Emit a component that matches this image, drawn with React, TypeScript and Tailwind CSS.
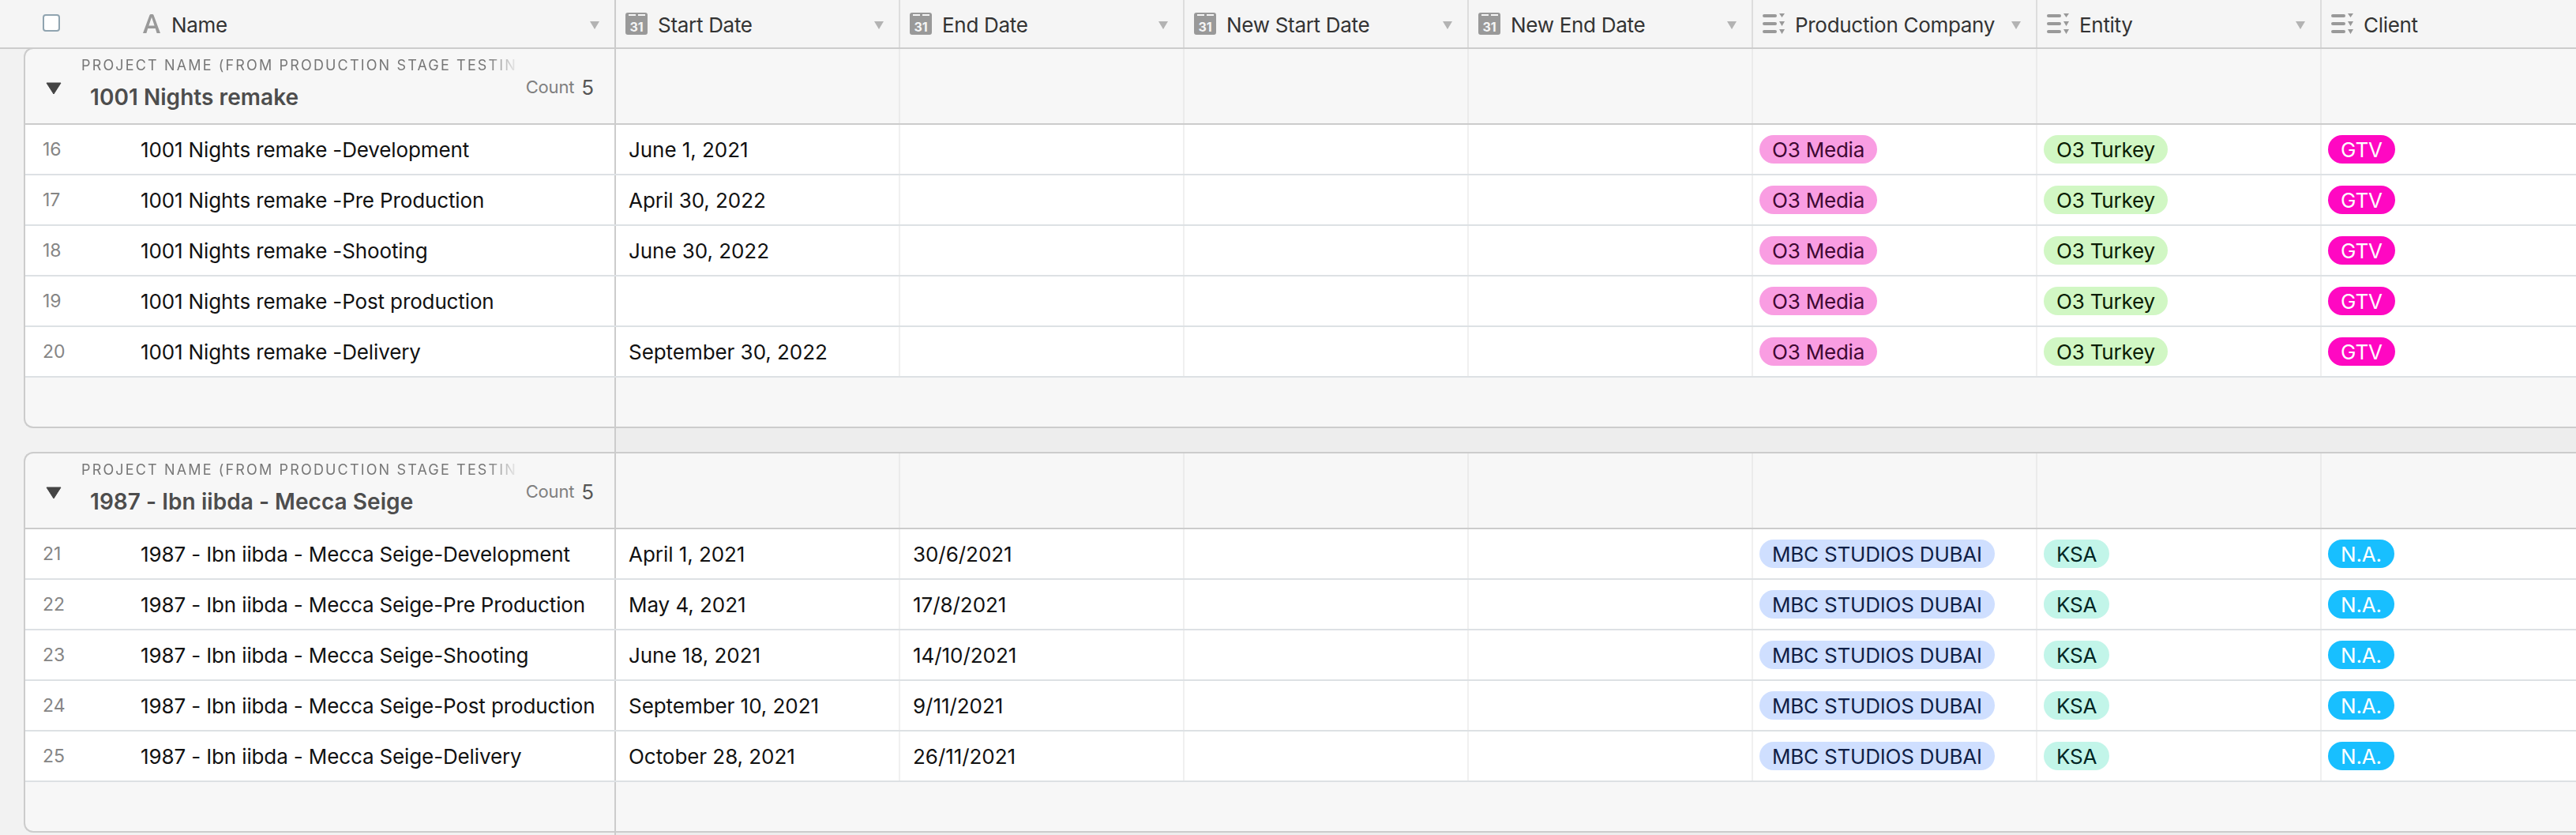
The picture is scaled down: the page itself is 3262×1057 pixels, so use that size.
import React from "react";

const FONT = "font-['Inter','Liberation_Sans',sans-serif]";

type Pill = { label: string; cls: string };

const Tag = ({ p }: { p: Pill }) => (
  <span className={`inline-flex h-[36px] items-center rounded-[18px] px-[16px] text-[26px] leading-[36px] tracking-[-0.2px] whitespace-nowrap ${p.cls}`}>
    <span className="pt-[2px]">{p.label}</span>
  </span>
);

const Caret = () => (
  <svg width="14" height="12" viewBox="0 0 14 12" className="mt-[4px] shrink-0">
    <path d="M1 1 H13 L7 11 Z" fill="#b3b3b3" />
  </svg>
);

const TextIcon = () => (
  <svg width="24" height="26" viewBox="0 0 24 26" className="shrink-0">
    <path fillRule="evenodd" fill="#999999" d="M1 25 L9.5 2 Q10 1 11 1 H13 Q14 1 14.5 2 L23 25 H18.6 L16.8 19 H7.2 L5.4 25 Z M8.4 15.4 H15.6 L12 4.8 Z" />
  </svg>
);

const CalIcon = () => (
  <svg width="28" height="28" viewBox="0 0 28 28" className="shrink-0">
    <rect width="28" height="28" rx="3" fill="#999999" />
    <rect x="4" y="2" width="9" height="2" fill="#f5f5f5" />
    <rect x="16" y="2" width="9" height="2" fill="#f5f5f5" />
    <text x="14" y="24" textAnchor="middle" fontSize="16" fontWeight="700" fill="#f5f5f5" fontFamily="Inter, sans-serif">31</text>
  </svg>
);

const ListIcon = () => (
  <svg width="28" height="26" viewBox="0 0 28 26" className="shrink-0">
    <rect y="1" width="18" height="4" rx="2" fill="#999999" />
    <rect y="11" width="18" height="4" rx="2" fill="#999999" />
    <rect y="21" width="18" height="4" rx="2" fill="#999999" />
    <path d="M21 0 H28 L24.5 5 Z M21 10 H28 L24.5 16 Z M21 20 H28 L24.5 26 Z" fill="#999999" />
  </svg>
);

const columns: { name: string; icon: "cal" | "list"; caret: boolean }[] = [
  { name: "Start Date", icon: "cal", caret: true },
  { name: "End Date", icon: "cal", caret: true },
  { name: "New Start Date", icon: "cal", caret: true },
  { name: "New End Date", icon: "cal", caret: true },
  { name: "Production Company", icon: "list", caret: true },
  { name: "Entity", icon: "list", caret: true },
  { name: "Client", icon: "list", caret: false },
];

const HeaderRow = () => (
  <div className="flex h-[62px] border-b-2 border-[#cccccc] bg-[#f5f5f5]">
    <div className="flex w-[780px] shrink-0 items-center border-r-2 border-[#cccccc] pl-[54px] pr-[18px]">
      <span className="mb-[2px] h-[22px] w-[22px] shrink-0 rounded-[4px] border-2 border-[#90a4b0] bg-white" />
      <span className="ml-[104px]"><TextIcon /></span>
      <span className="ml-[13px] flex-1 pt-[2px] text-[26px] tracking-[-0.3px] text-[#333333]">Name</span>
      <Caret />
    </div>
    {columns.map((c, i) => (
      <div
        key={c.name}
        className={`flex items-center pl-[12px] pr-[18px] ${i === columns.length - 1 ? "flex-1" : "w-[360px] shrink-0 border-r-2 border-[#dddddd]"}`}
      >
        {c.icon === "cal" ? <CalIcon /> : <ListIcon />}
        <span className="ml-[13px] flex-1 pt-[2px] text-[26px] tracking-[-0.3px] text-[#333333] whitespace-nowrap">{c.name}</span>
        {c.caret && <Caret />}
      </div>
    ))}
  </div>
);

type RowData = { n: number; name: string; start: string; end: string };
type Group = { title: string; company: Pill; entity: Pill; client: Pill; rows: RowData[] };

const pink = "bg-[#f99de2] text-[#400832]";
const green = "bg-[#d1f7c4] text-[#0b1d05]";
const magenta = "bg-[#ff08c2] text-white";
const blue = "bg-[#cfdfff] text-[#102046]";
const teal = "bg-[#c2f5e9] text-[#012524]";
const cyan = "bg-[#18bfff] text-white";

const groups: Group[] = [
  {
    title: "1001 Nights remake",
    company: { label: "O3 Media", cls: pink },
    entity: { label: "O3 Turkey", cls: green },
    client: { label: "GTV", cls: magenta },
    rows: [
      { n: 16, name: "1001 Nights remake -Development", start: "June 1, 2021", end: "" },
      { n: 17, name: "1001 Nights remake -Pre Production", start: "April 30, 2022", end: "" },
      { n: 18, name: "1001 Nights remake -Shooting", start: "June 30, 2022", end: "" },
      { n: 19, name: "1001 Nights remake -Post production", start: "", end: "" },
      { n: 20, name: "1001 Nights remake -Delivery", start: "September 30, 2022", end: "" },
    ],
  },
  {
    title: "1987 - Ibn iibda - Mecca Seige",
    company: { label: "MBC STUDIOS DUBAI", cls: blue },
    entity: { label: "KSA", cls: teal },
    client: { label: "N.A.", cls: cyan },
    rows: [
      { n: 21, name: "1987 - Ibn iibda - Mecca Seige-Development", start: "April 1, 2021", end: "30/6/2021" },
      { n: 22, name: "1987 - Ibn iibda - Mecca Seige-Pre Production", start: "May 4, 2021", end: "17/8/2021" },
      { n: 23, name: "1987 - Ibn iibda - Mecca Seige-Shooting", start: "June 18, 2021", end: "14/10/2021" },
      { n: 24, name: "1987 - Ibn iibda - Mecca Seige-Post production", start: "September 10, 2021", end: "9/11/2021" },
      { n: 25, name: "1987 - Ibn iibda - Mecca Seige-Delivery", start: "October 28, 2021", end: "26/11/2021" },
    ],
  },
];

const Cell = ({ children, last }: { children?: React.ReactNode; last?: boolean }) => (
  <div className={`flex items-center pl-[8px] ${last ? "flex-1" : "w-[360px] shrink-0 border-r-2 border-[#f0f0f0]"}`}>{children}</div>
);

const TextCell = ({ children }: { children?: React.ReactNode }) => (
  <div className="flex w-[360px] shrink-0 items-center border-r-2 border-[#f0f0f0] pl-[16px] text-[26px] tracking-[-0.05px] text-[#111111] whitespace-nowrap">{children}</div>
);

const DataRow = ({ r, g }: { r: RowData; g: Group }) => (
  <div className="flex h-[64px] border-b-2 border-[#dde1e4] bg-white">
    <div className="flex w-[748px] shrink-0 items-center border-r-2 border-[#cccccc]">
      <span className="w-[146px] shrink-0 pl-[22px] text-[23px] text-[#858585]">{r.n}</span>
      <span className="text-[26px] tracking-[-0.13px] text-[#111111] whitespace-nowrap">{r.name}</span>
    </div>
    <TextCell>{r.start}</TextCell>
    <TextCell>{r.end}</TextCell>
    <Cell />
    <Cell />
    <Cell><Tag p={g.company} /></Cell>
    <Cell><Tag p={g.entity} /></Cell>
    <Cell last><Tag p={g.client} /></Cell>
  </div>
);

const GroupBlock = ({ g }: { g: Group }) => (
  <div className="ml-[30px] overflow-hidden rounded-l-[12px] border-y-2 border-l-2 border-[#cccccc] bg-[#f7f7f7]">
    <div className="flex h-[96px] border-b-2 border-[#cccccc]">
      <div className="flex w-[748px] shrink-0 border-r-2 border-[#cccccc]">
        <svg width="20" height="16" viewBox="0 0 20 16" className="ml-[26px] mt-[42px] shrink-0">
          <path d="M1 1 H19 L10 15 Z" fill="#444444" stroke="#444444" strokeWidth="1" strokeLinejoin="round" />
        </svg>
        <div className="ml-[25px] min-w-0 flex-1 pt-[9px]">
          <div className="w-[560px] overflow-hidden text-[18px] leading-[24px] tracking-[2.15px] text-[#777777] whitespace-nowrap [mask-image:linear-gradient(to_right,black_92%,transparent_99%)]">
            PROJECT NAME (FROM PRODUCTION STAGE TESTIN
          </div>
          <div className="ml-[11px] mt-[10px] text-[28px] leading-[36px] font-semibold tracking-[0.05px] text-[#4d4d4d] whitespace-nowrap">{g.title}</div>
        </div>
        <div className="mr-[26px] mt-[30px] flex h-[36px] items-center">
          <span className="text-[22px] tracking-[-0.2px] text-[#808080]">Count</span>
          <span className="ml-[9px] text-[26px] text-[#555555]">5</span>
        </div>
      </div>
      {columns.map((c, i) => (
        <div key={c.name} className={i === columns.length - 1 ? "flex-1" : "w-[360px] shrink-0 border-r-2 border-[#ebebeb]"} />
      ))}
    </div>
    {g.rows.map((r) => (
      <DataRow key={r.n} r={r} g={g} />
    ))}
    <div className="flex h-[62px]">
      <div className="w-[748px] shrink-0 border-r-2 border-[#cccccc]" />
    </div>
  </div>
);

const Gap = ({ h }: { h: string }) => (
  <div className={`ml-[32px] flex ${h}`}>
    <div className="w-[748px] shrink-0 border-r-2 border-[#cccccc]" />
    <div className="flex-1 bg-[#ededed]" />
  </div>
);

export default function App() {
  return (
    <div className={`h-[1057px] w-full overflow-hidden bg-[#f2f2f2] antialiased ${FONT}`}>
      <HeaderRow />
      <div className="-mt-[2px]">
        <GroupBlock g={groups[0]} />
        <Gap h="h-[30px]" />
        <GroupBlock g={groups[1]} />
        <Gap h="h-[3px]" />
      </div>
    </div>
  );
}
